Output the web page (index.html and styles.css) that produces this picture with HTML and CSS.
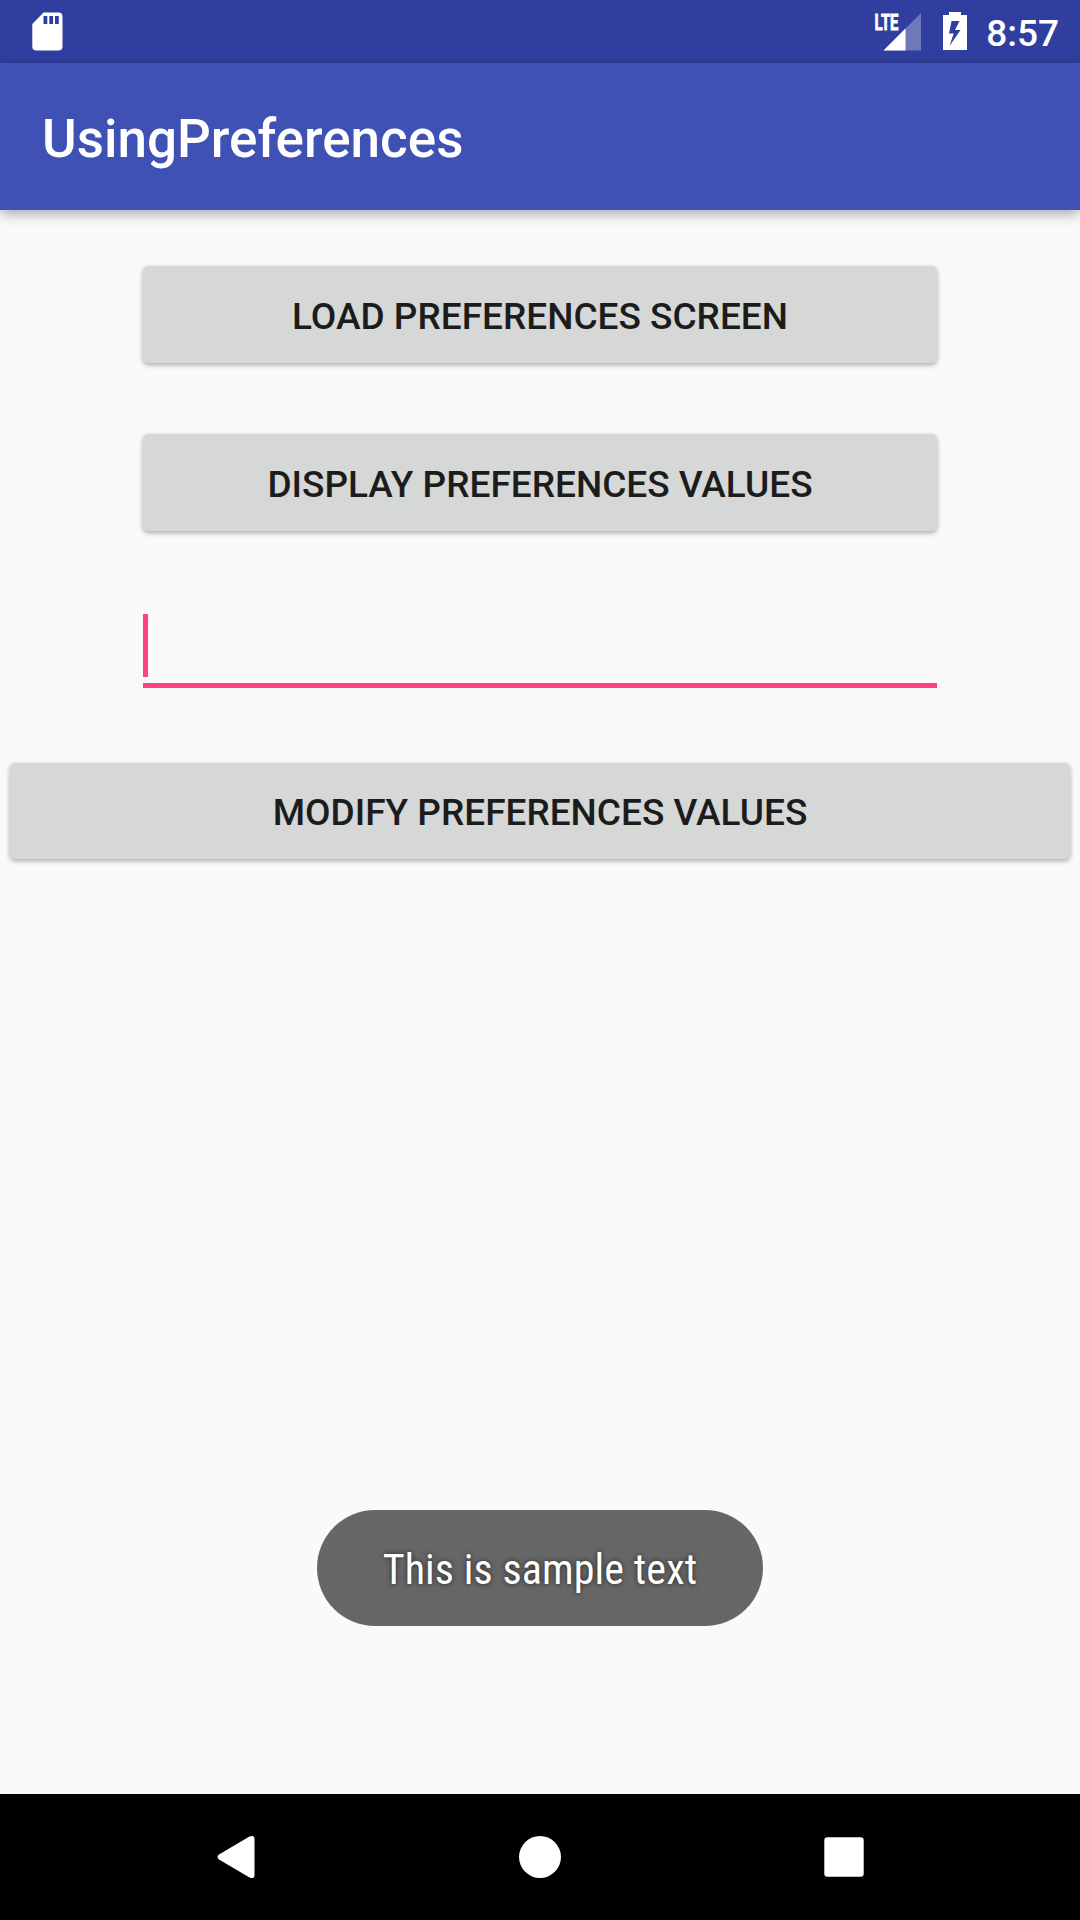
FILE: index.html
```html
<!DOCTYPE html>
<html lang="en">
<head>
<meta charset="utf-8">
<title>UsingPreferences</title>
<link rel="stylesheet" href="styles.css">
</head>
<body>
<div class="screen">
  <header class="status-bar">
    <svg class="sd-icon" width="31" height="39" viewBox="0 0 31 39"><path fill="#fff" fill-rule="evenodd" d="M11.500 .5H26.500a4 4 0 0 1 4 4V34.500a4 4 0 0 1-4 4H4.300a4 4 0 0 1-4-4V12ZM11.500 4v8h3.800v-8ZM17.300 4v8h3.800v-8ZM23 4v8h3.800v-8Z"/></svg>
    <div class="status-right">
      <svg class="signal-icon" width="48" height="40" viewBox="0 0 48 40"><path fill="#fff" fill-opacity=".3" d="M47 2V39.500H9.500Z"/><path fill="#fff" d="M31.500 17.500V39.500H9.500Z"/><text class="lte" x="0.500" y="18.600" textLength="24" lengthAdjust="spacingAndGlyphs">LTE</text></svg>
      <svg class="battery-icon" width="24" height="38" viewBox="0 0 24 38"><path fill="#fff" fill-rule="evenodd" d="M6 0H18V3H24V38H0V3H6ZM8.500 9L6 21.500H10.700L6.500 34L17.500 18H12L16.500 9Z"/></svg>
      <span class="clock">8:57</span>
    </div>
  </header>
  <div class="app-bar"><h1 class="title">UsingPreferences</h1></div>
  <main class="content">
    <button class="button narrow">LOAD PREFERENCES SCREEN</button>
    <button class="button narrow">DISPLAY PREFERENCES VALUES</button>
    <div class="field"><span class="caret"></span></div>
    <button class="button wide">MODIFY PREFERENCES VALUES</button>
    <div class="toast"><span class="toast-text">This is sample text</span></div>
  </main>
  <nav class="nav-bar">
    <svg width="42" height="42" viewBox="0 0 42 42"><path fill="#fff" d="M2 18.500L32.500 .5Q37.500-1.500 37.500 3V39Q37.500 43.500 32.500 41.500L2 23.500Q-1 21 2 18.500Z"/></svg>
    <svg width="42" height="42" viewBox="0 0 42 42"><circle cx="21" cy="21" r="21" fill="#fff"/></svg>
    <svg width="42" height="42" viewBox="0 0 42 42"><rect x="1.300" y="1.300" width="39.400" height="39.400" rx="3" fill="#fff"/></svg>
  </nav>
</div>
</body>
</html>
```
FILE: styles.css
```css
* { box-sizing: border-box; }
body { margin: 0; font-family: Roboto, "Liberation Sans", sans-serif; }
.screen { width: 1080px; height: 1920px; display: flex; flex-direction: column; background: #fafafa; overflow: hidden; }
.status-bar { height: 63px; flex: none; display: flex; justify-content: space-between; align-items: flex-start; padding: 12px 21px 0 32px; background: #303f9f; color: #fff; }
.status-right { display: flex; align-items: flex-start; }
.signal-icon { margin-right: 21px; margin-top: -1px; overflow: visible; }
.battery-icon { margin-right: 19px; }
.lte { font: 700 22px Roboto, sans-serif; fill: #fff; stroke: #fff; stroke-width: .8px; }
.clock { font-size: 37px; font-weight: 500; line-height: 43px; }
.app-bar { height: 147px; flex: none; display: flex; align-items: center; padding: 4px 0 0 42px; background: #3f51b5; box-shadow: 0 4px 12px rgba(0, 0, 0, .33); z-index: 1; }
.title { margin: 0; color: #fff; font-size: 53px; font-weight: 500; line-height: 62px; }
.content { flex: 1; display: flex; flex-direction: column; align-items: center; padding-top: 56px; }
.button { flex: none; height: 97px; margin: 0; padding: 3px 0 0; border: 0; border-radius: 5px; background: #d6d7d7; color: #1c1c1c; font-family: inherit; font-size: 37px; font-weight: 500; box-shadow: 0 2px 5px rgba(0, 0, 0, .33); }
.narrow { width: 794px; margin-bottom: 71px; }
.wide { width: 1060px; height: 96px; padding-top: 2px; margin-top: 75px; }
.field { width: 794px; height: 74px; margin-top: 12px; border-bottom: 5px solid #ff4081; flex: none; }
.caret { display: block; width: 5px; height: 63px; background: #ff4081; }
.toast { width: 446px; height: 116px; margin-top: auto; margin-bottom: 168px; padding-top: 2px; border-radius: 58px; background: #666; display: flex; align-items: center; justify-content: center; }
.toast-text { color: #fff; font-family: "Roboto Condensed", Roboto, sans-serif; font-size: 42px; font-stretch: condensed; letter-spacing: .1px; white-space: nowrap; text-shadow: 0 0 5px rgba(0, 0, 0, .65); }
.nav-bar { height: 126px; flex: none; display: flex; align-items: center; justify-content: space-between; padding: 0 215px 0 217px; background: #000; }
.nav-bar circle { transform: translateX(-1px); }
.nav-bar svg { overflow: visible; }
```
